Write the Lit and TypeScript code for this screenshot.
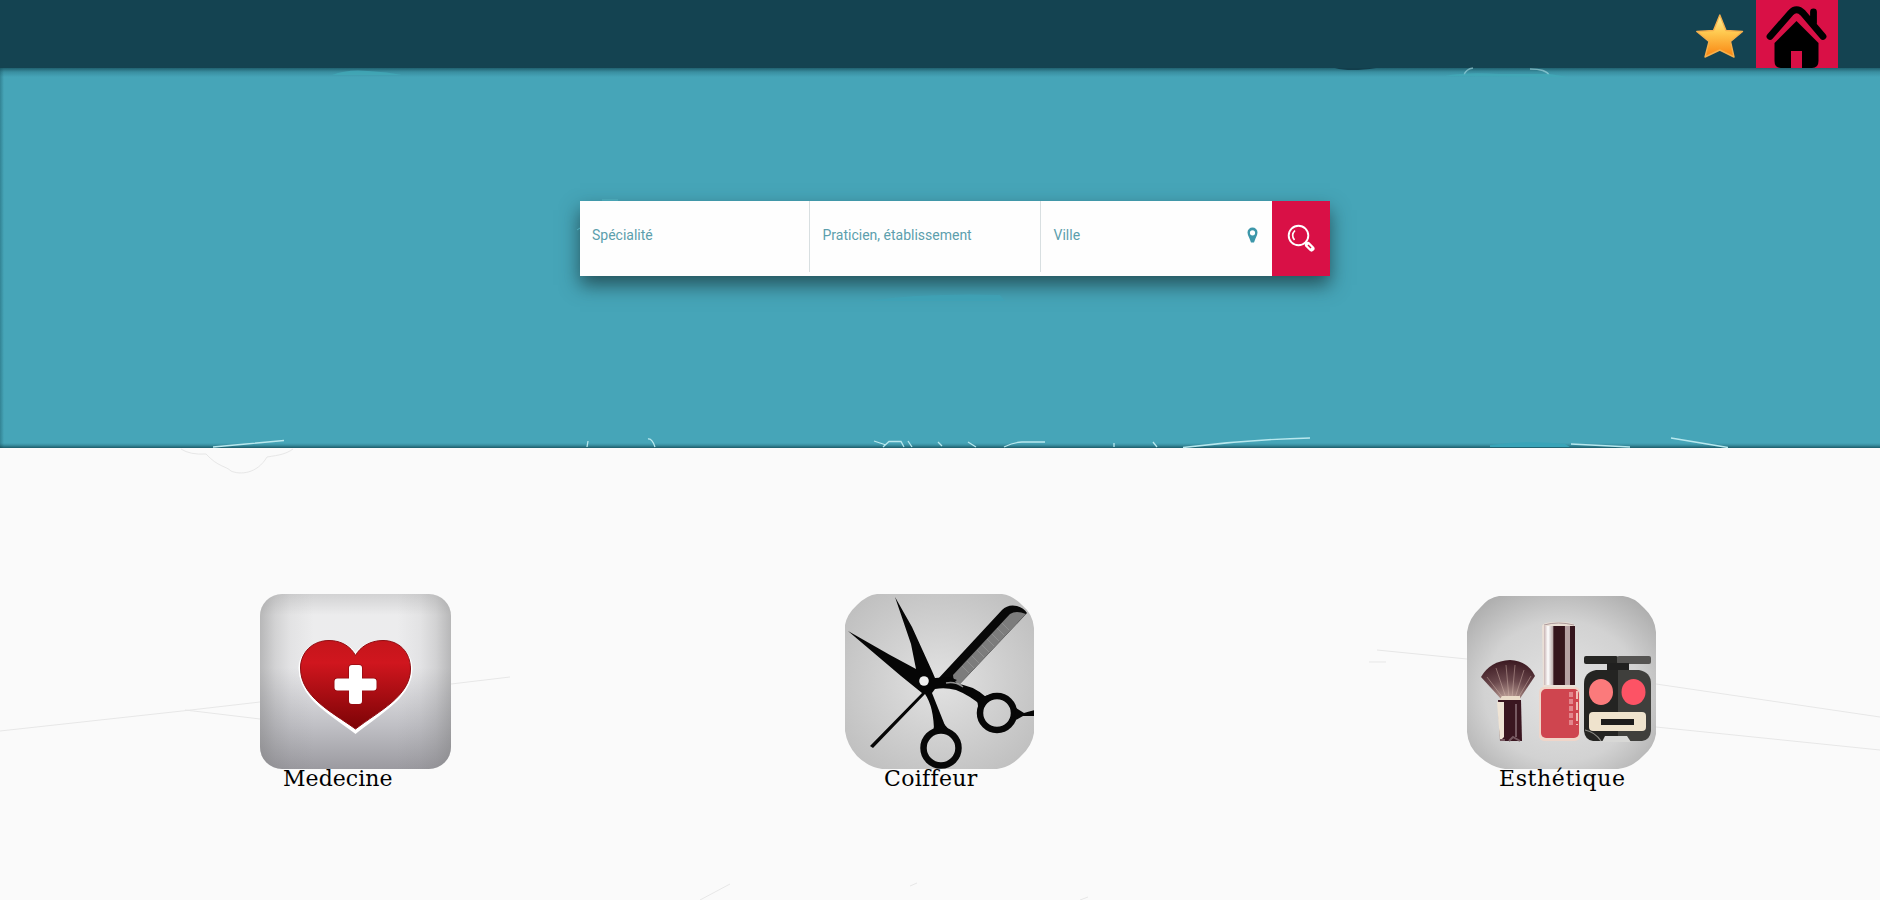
import { LitElement, html, css, svg } from "lit";
import { customElement } from "lit/decorators.js";

const medicine = svg`
  <defs>
    <linearGradient id="mg" x1="0" y1="0" x2="0" y2="1"><stop offset="0" stop-color="#d2d2d3"/><stop offset=".12" stop-color="#ececed"/><stop offset=".42" stop-color="#ececee"/><stop offset=".75" stop-color="#c0c0c5"/><stop offset="1" stop-color="#9b9aa0"/></linearGradient>
    <linearGradient id="me"><stop offset="0" stop-color="#777" stop-opacity=".45"/><stop offset=".08" stop-color="#777" stop-opacity=".22"/><stop offset=".16" stop-color="#777" stop-opacity=".08"/><stop offset=".28" stop-color="#777" stop-opacity="0"/><stop offset=".72" stop-color="#777" stop-opacity="0"/><stop offset=".84" stop-color="#777" stop-opacity=".08"/><stop offset=".92" stop-color="#777" stop-opacity=".22"/><stop offset="1" stop-color="#777" stop-opacity=".45"/></linearGradient>
    <linearGradient id="mh" x1="0" y1="0" x2="0" y2="1"><stop offset="0" stop-color="#c5151b"/><stop offset=".25" stop-color="#d0161e"/><stop offset="1" stop-color="#7c0306"/></linearGradient>
  </defs>
  <rect width="191" height="175" rx="22" fill="url(#mg)"/><rect width="191" height="175" rx="22" fill="url(#me)"/>
  <path d="M95.500 138C72 120 40 104 40 74C40 60 53 50 69 48C82 47 91 54 95.500 61C100 54 110 47 123 48C139 50 151 60 151 75C151 103 119 119 95.500 138Z" fill="#fff" stroke="#fff" stroke-width="3"/>
  <path d="M95.500 135C72 118 40.500 103 40.500 74C40.500 58 53 46.500 69 46.500C82 46.500 91 53 95.500 61.500C100 53 110 46.500 123 46.500C139 46.500 150.500 58 150.500 75C150.500 102 119 117 95.500 135Z" fill="url(#mh)" stroke="#900d12" stroke-width="1"/>
  <path d="M92 71h7q3 0 3 3V84.500H113.500q3 0 3 3v6q0 3-3 3H102V107q0 3-3 3H92q-3 0-3-3V96.500H77.500q-3 0-3-3v-6q0-3 3-3H89V74Q89 71 92 71Z" fill="#fff" stroke="#950d13" stroke-width="1.500" paint-order="stroke"/>`;

const hair = svg`
  <defs>
    <radialGradient id="hg" cx=".5" cy=".5" r=".65"><stop offset="0" stop-color="#e2e2e2"/><stop offset="1" stop-color="#bebebe"/></radialGradient>
    <clipPath id="hc"><path d="M32 0H157Q167 1 177 11Q188 20 189 34V139Q187 152 176 162Q166 173 152 175H37Q23 173 12 162Q2 151 0 137V31Q2 20 12 11Q22 1 32 0Z"/></clipPath>
  </defs>
  <g clip-path="url(#hc)">
    <rect width="189" height="175" fill="url(#hg)"/>
    <path d="M92 86L157 16Q163 10 172 12Q179 14 182 19L113 92L103 86Z" fill="#080808"/>
    <path d="M108 81L165 20Q171 16 181 20L114 91Q108 87 108 81Z" fill="#7c7c7c"/>
    <path d="M117 72L124 79M122 67L129 74M127 62L134 69M132 56L139 63M137 51L144 58M142 45L149 52M147 40L154 47M152 34L159 41M157 29L164 36" stroke="#8f8f8f" fill="none"/>
    <path d="M50 3L67 33L87 77L90 84L104 83L112 86L108 89Q128 91 141 103Q148 104 137 112Q124 101 111 96Q100 93 90 95L87 99L101 134L89 139Q89 113 80 100L28 154L25 152L77 99L56 82L3 37L45 61L71 75L66 50Z" fill="#060606"/>
    <circle cx="79" cy="87" r="4.800" fill="#f1f1f1"/>
    <circle cx="96" cy="154" r="17.500" fill="none" stroke="#070707" stroke-width="6.500"/>
    <circle cx="152" cy="119" r="17" fill="none" stroke="#070707" stroke-width="6.500"/>
    <path d="M88 134L99 130L108 140L94 138ZM132 105L143 101L141 110L134 119ZM171 114L179 119Q185 117 190 116V122Q184 122 178 122L169 127Z" fill="#070707"/>
    <path d="M101 89Q110 87 118 93" fill="none" stroke="#eee" stroke-width="1.500" opacity=".6"/>
  </g>`;

const beauty = svg`
  <defs>
    <radialGradient id="bg" cx=".5" cy=".55" r=".68"><stop offset="0" stop-color="#e3e3e3"/><stop offset=".6" stop-color="#d2d2d2"/><stop offset="1" stop-color="#aaa"/></radialGradient>
    <linearGradient id="bm"><stop offset="0" stop-color="#c8b4b4"/><stop offset=".13" stop-color="#fff"/><stop offset=".3" stop-color="#b6a5a6"/><stop offset=".31" stop-color="#35151d"/><stop offset=".66" stop-color="#35151d"/><stop offset=".68" stop-color="#b6a1a4"/><stop offset=".83" stop-color="#b6a1a4"/><stop offset=".85" stop-color="#35151d"/></linearGradient>
    <radialGradient id="bf" cx=".5" cy="1" r="1"><stop offset="0" stop-color="#c7aaa0"/><stop offset=".5" stop-color="#6a484c"/><stop offset="1" stop-color="#3a1820"/></radialGradient>
  </defs>
  <path d="M32 2H156Q167 3 177 14Q188 24 189 38V140Q187 153 176 162Q166 173 151 175H38Q24 173 13 163Q1 153 0 138V38Q2 24 13 14Q22 3 32 2Z" fill="url(#bg)"/>
  <path d="M14 83Q23 67 43 66Q61 67 68 82L52 106H35Z" fill="url(#bf)"/>
  <path d="M36 104L20 83M39 104L29 74M42 104L39 71M45 104L48 71M48 104L57 76M51 104L64 82" stroke="#d5b8ad" stroke-width=".7" opacity=".65"/>
  <path d="M35 102H53V108H31Z" fill="#eadbc8"/><path d="M31 106H54L55 147H33Z" fill="#3a1620"/><path d="M30 108H37V143L33 147Z" fill="#efe4d5"/><path d="M49 110V143M33 146H38M42 147L46 143L53 147" stroke="#765961" stroke-width="2" fill="none"/>
  <path d="M75 32Q76 28 91 28Q107 28 108 32V94H76Z" fill="#eadfd6"/><rect x="77" y="32" width="31" height="59" fill="url(#bm)"/><path d="M77 31Q91 27 107 31" fill="none" stroke="#ac999b"/>
  <rect x="72" y="93" width="41" height="54" rx="5" fill="#f0d5c9"/><rect x="74" y="95" width="38" height="49" rx="5" fill="#cf454f"/>
  <path d="M104 98V132" stroke="#e4868c" stroke-width="4" stroke-dasharray="5 2"/><path d="M110 97V131" stroke="#f0c0b8" stroke-width="2" stroke-dasharray="8 3"/>
  <rect x="117" y="62" width="34" height="8" rx="2" fill="#252523"/><rect x="150" y="62" width="34" height="8" rx="2" fill="#555452"/><path d="M140 69H162V80H140Z" fill="#20201f"/>
  <path d="M151 76H129Q117 78 117 90V137Q118 146 126 147H151Z" fill="#242422"/><path d="M151 76H172Q184 78 184 90V137Q183 146 175 147H151Z" fill="#3f3f3c"/>
  <ellipse cx="134" cy="98" rx="12" ry="13" fill="#fb7a7b"/><ellipse cx="166.500" cy="98" rx="12" ry="13" fill="#fd5365"/>
  <rect x="122" y="118" width="57" height="19" rx="4" fill="#efe3cd"/><rect x="134" y="125" width="33" height="6" fill="#1d1c1c"/>
  <path d="M135 148L138 142H160L164 148Z" fill="#d8d8d6"/>
  <path d="M118 136Q128 138 134 147" fill="none" stroke="#8a8984" stroke-width="1.200"/>`;

@customElement("app-root")
class AppRoot extends LitElement {
  static styles = css`
    :host { display: block; height: 900px; overflow: hidden; position: relative; background: #fafafa; }
    * { box-sizing: border-box; }
    svg { display: block; }
    .top { height: 68px; background: #144351; display: flex; justify-content: flex-end; padding-right: 42px; }
    .star { width: 48px; height: 48px; margin: 13px 12px 0 0; }
    .home { width: 82px; height: 68px; background: #d91046; }
    .hero { height: 380px; padding: 133px 0 0 580px; background: linear-gradient(rgba(20,75,88,.75), rgba(20,75,88,.25) 4px, rgba(20,75,88,0) 9px), linear-gradient(to top, rgba(14,68,80,.75), rgba(14,68,80,.2) 3px, rgba(14,68,80,0) 5px), linear-gradient(to right, rgba(14,68,80,.35), rgba(14,68,80,0) 4px), #46a5b8; }
    .search { width: 750px; height: 75px; display: flex; background: #fefefe; box-shadow: 0 9px 18px rgba(25,55,60,.75); font: 14px/18px Roboto, sans-serif; color: #5c9fad; }
    .field { width: 231px; display: flex; justify-content: space-between; padding: 25px 13px 0 12px; }
    .field + .field { background: linear-gradient(#d8dfe1, #d8dfe1) 0 0 / 1px 71px no-repeat; padding-left: 13.500px; }
    .field:first-child { width: 229px; }
    .go { width: 58px; height: 75px; margin-left: auto; background: #d91046; }
    .cats { display: grid; grid-template-columns: 585px 622px 200px; padding: 146px 0 0 260px; position: relative; z-index: 1; }
    .name { font: 22px/26px "DejaVu Serif", serif; color: #000; margin-top: -3px; white-space: nowrap; }
    .m { padding-left: 23px; letter-spacing: .05px; } .c { padding-left: 39px; letter-spacing: .3px; } .e { padding-left: 32px; letter-spacing: .6px; }
    .art { position: absolute; left: 0; top: 0; pointer-events: none; }
  `;
  render() {
    return html`
      <header class="top">
        <svg class="star" viewBox="0 0 48 48">
          <defs><linearGradient id="s" x1="0" y1="0" x2="0" y2="1"><stop offset="0" stop-color="#fff0a0"/><stop offset=".4" stop-color="#ffcb52"/><stop offset="1" stop-color="#f98410"/></linearGradient></defs>
          <path d="M23.800 2L30 17.500L46.500 18.500L34.500 28.500L38 44L23.800 37L9 44L13 28.500L.8 18.500L17.500 17.500Z" fill="url(#s)" stroke="#f6b04c" stroke-width="1.400" stroke-linejoin="round"/>
        </svg>
        <svg class="home" viewBox="0 0 82 68">
          <path d="M14 36.500L34.500 13Q40.500 6.500 47 13L67 36.500M57.500 12V23" fill="none" stroke="#000" stroke-width="6.800" stroke-linecap="round"/>
          <path d="M40.500 21L62.500 43V61Q62.500 68 56 68H46V51H35V68H25Q18.500 68 18.500 61V43Z" fill="#000"/>
        </svg>
      </header>
      <section class="hero">
        <div class="search">
          <div class="field">Spécialité</div>
          <div class="field">Praticien, établissement</div>
          <div class="field"><span>Ville</span>
            <svg width="11" height="18" viewBox="0 0 11 18"><path fill-rule="evenodd" d="M5.500 1.500A5 5 0 0 1 10.500 6.500Q10.500 9 8.500 12.500L7 16.500H4L2.500 12.500Q.5 9 .5 6.500A5 5 0 0 1 5.500 1.500ZM5.500 4.200A2.600 2.600 0 1 0 5.500 9.400A2.600 2.600 0 1 0 5.500 4.200Z" fill="#3d97aa"/></svg>
          </div>
          <svg class="go" viewBox="0 0 58 75"><g fill="none" stroke="#fff"><circle cx="26.500" cy="34.500" r="9.800" stroke-width="1.900"/><path d="M22.500 39Q18.500 34 23 29.500" stroke-width="1.600"/><path d="M33 41L36 44" stroke-width="2"/><path d="M36 44L39.500 47.500" stroke-width="6" stroke-linecap="round"/><path d="M36 44L39 47" stroke="#d91046" stroke-width="1.400"/></g></svg>
        </div>
      </section>
      <main class="cats">
        <div><svg width="191" height="175">${medicine}</svg><div class="name m">Medecine</div></div>
        <div><svg width="189" height="175">${hair}</svg><div class="name c">Coiffeur</div></div>
        <div><svg width="189" height="175">${beauty}</svg><div class="name e">Esthétique</div></div>
      </main>
      <svg class="art" width="1880" height="900" fill="none">
        <g stroke="#e7e7e7">
          <path d="M181 449Q190 455 206 454C218 467 226 466 231 471C240 475 257 474 267 457C280 455 286 454 293 449"/>
          <path d="M0 731L182 711L260 702M451 684L510 677M185 710L260 719M1377 650L1467 659M1369 662H1386M1656 684L1880 717M1656 727L1880 750M700 900L730 884M910 886L917 883M1080 900L1088 897"/>
        </g>
        <g stroke="#b8e8ee" stroke-width="1.300">
          <path d="M213 447L246 444L284 440.500M587 447L588 441M648 439Q652 438 655 447M874 441L886 445M883 447L889 441.500H901L904 447M908 441L912 447M938 442L942 446M968 442L976 447M1004 447Q1014 442 1022 442H1045M1114 447V443M1153 442L1157 447M1183 447.500Q1247 439.500 1310 438M1571 444L1630 447M1671 438L1728 447.500"/>
          <path d="M1464 75Q1466 69 1473 68M1530 69Q1546 69 1549 75" opacity=".55"/>
        </g>
        <path d="M332 75Q347 69 368 71Q388 72 402 75ZM1445 76Q1465 72 1500 74H1550L1568 77Z" fill="#42a9b8" opacity=".8"/>
        <path d="M1335 68H1376Q1350 72 1335 68Z" fill="#123e4c"/>
        <path d="M870 301Q920 293 1000 295L1005 301Z" fill="#3ea4b7" opacity=".6"/>
        <path d="M602 200H618M577 230L580 228" stroke="#55b7c4" opacity=".8"/>
        <path d="M1490 447V445Q1530 440 1565 444L1570 447Z" fill="#39a4b8"/>
      </svg>`;
  }
}
